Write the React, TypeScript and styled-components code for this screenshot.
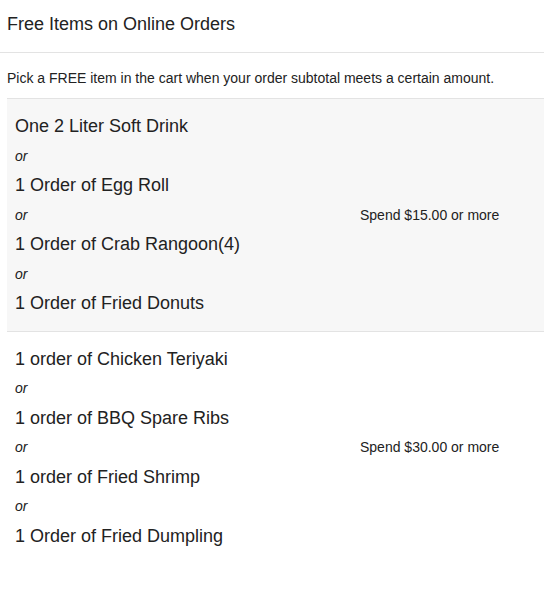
import React from "react";
import styled, { createGlobalStyle } from "styled-components";

const TIERS = [
  {
    id: 0,
    spend: "Spend $15.00 or more",
    items: [
      "One 2 Liter Soft Drink",
      "1 Order of Egg Roll",
      "1 Order of Crab Rangoon(4)",
      "1 Order of Fried Donuts",
    ],
  },
  {
    id: 1,
    spend: "Spend $30.00 or more",
    items: [
      "1 order of Chicken Teriyaki",
      "1 order of BBQ Spare Ribs",
      "1 order of Fried Shrimp",
      "1 Order of Fried Dumpling",
    ],
  },
];

const App = () => {
  return (
    <>
      <GlobalStyle />
      <S.Page>
        <S.Header>Free Items on Online Orders</S.Header>
        <S.Intro>
          Pick a FREE item in the cart when your order subtotal meets a certain amount.
        </S.Intro>
        {TIERS.map((tier) => (
          <S.Tier key={tier.id} shaded={tier.id % 2 === 0}>
            <S.ItemList>
              {tier.items.map((item, i) => (
                <React.Fragment key={item}>
                  {i > 0 && <S.Or>or</S.Or>}
                  <S.Item>{item}</S.Item>
                </React.Fragment>
              ))}
            </S.ItemList>
            <S.Spend>{tier.spend}</S.Spend>
          </S.Tier>
        ))}
      </S.Page>
    </>
  );
};

export default App;

const GlobalStyle = createGlobalStyle`
  body {
    margin: 0;
    background: #fff;
    font-family: "Liberation Sans", Arial, sans-serif;
    color: #222;
  }
`;

const S = {
  Page: styled.div`
    width: 544px;
  `,
  Header: styled.h1`
    margin: 0;
    padding: 13px 7px 17px;
    font-size: 18px;
    line-height: 22px;
    font-weight: normal;
    border-bottom: 1px solid #e3e3e3;
  `,
  Intro: styled.p`
    margin: 0;
    padding: 17px 7px 11px;
    font-size: 14px;
    line-height: 17px;
  `,
  Tier: styled.div<{ shaded: boolean }>`
    margin-left: 7px;
    display: grid;
    grid-template-columns: 1fr 184px;
    align-items: center;
    padding: 13px 0 12px 8px;
    border-top: 1px solid #e3e3e3;
    background: ${(p) => (p.shaded ? "#f7f7f7" : "#fff")};
  `,
  ItemList: styled.div`
    display: flex;
    flex-direction: column;
  `,
  Item: styled.div`
    font-size: 18px;
    line-height: 29.5px;
  `,
  Or: styled.div`
    font-size: 14px;
    font-style: italic;
    line-height: 29.5px;
  `,
  Spend: styled.div`
    font-size: 14px;
    line-height: 17px;
  `,
};
